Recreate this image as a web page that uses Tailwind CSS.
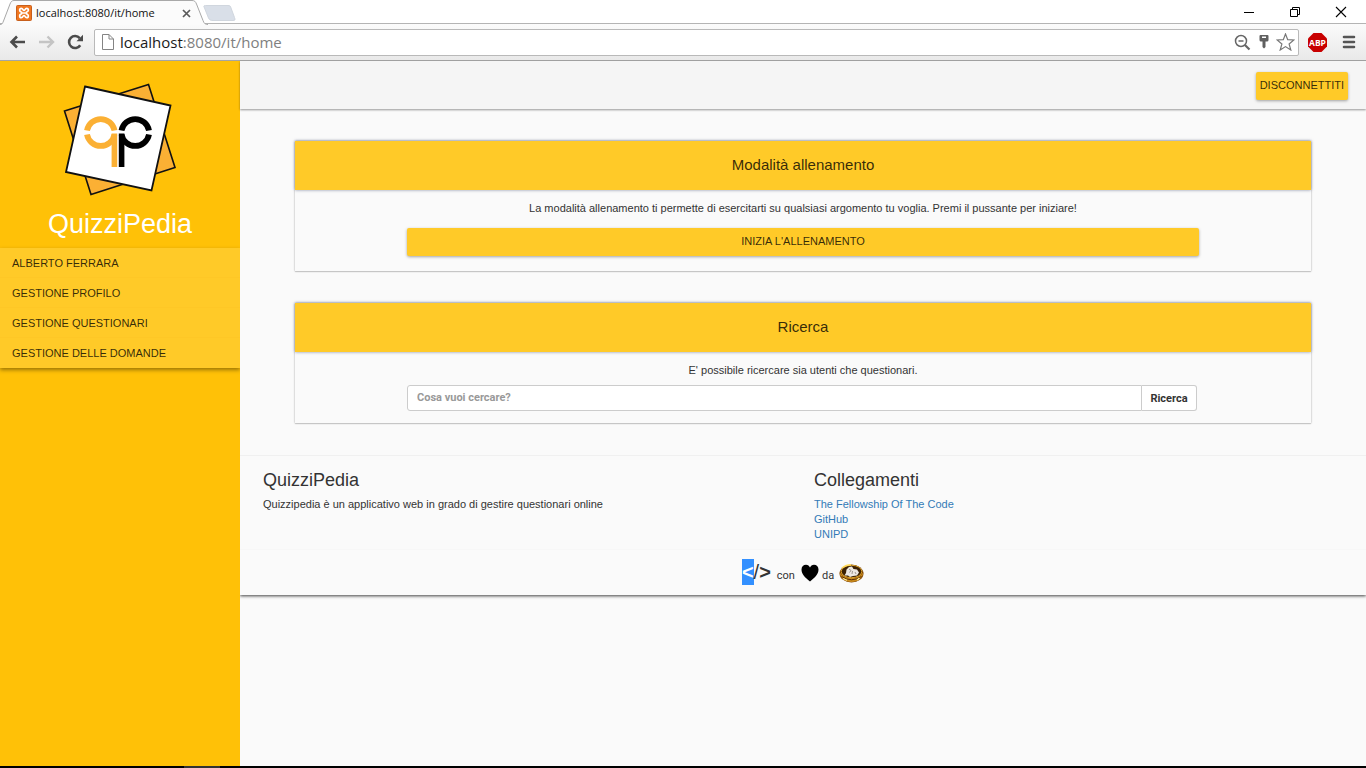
<!DOCTYPE html>
<html lang="it">
<head>
<meta charset="utf-8">
<title>QuizziPedia</title>
<script src="https://cdn.jsdelivr.net/npm/@tailwindcss/browser@4"></script>
</head>
<body class="flex min-h-screen flex-col bg-[#fafafa] font-['Liberation_Sans',Arial,sans-serif] text-[11px] leading-[15px] text-[#333]">

<!-- Browser window -->
<div class="border-b border-[#a5a5a5] bg-white font-['Open_Sans',sans-serif]">
  <div class="flex h-6 items-start justify-between border-b border-[#b4b4b4]">
    <div class="relative flex h-6 w-[240px] items-center">
      <svg class="absolute left-0 top-0" width="240" height="25" viewBox="0 0 240 25" fill="none">
        <path d="M0 24.5C2 24.5 2.500 23.500 3.500 21L10 4C11 1.500 12 .5 14 .5H192C194.500 .5 195.500 1.500 196.500 4L203 20.500C204 23.500 205.500 24.500 208 24.500V25H0Z" fill="#fbfbfb"/>
        <path d="M0 24.500C2 24.500 2.500 23.500 3.500 21L10 4C11 1.500 12 .5 14 .5H192C194.500 .5 195.500 1.500 196.500 4L203 20.500C204 23.500 205.500 24.500 208 24.500" stroke="#a8a8a8"/>
        <path d="M205.500 5.500H228C230 5.500 230.500 6 231 8L234.500 17.500C235.500 20 235 20.500 233 20.500H213C210.500 20.500 209.500 20 208.500 18L204.500 8C203.500 6 203.500 5.500 205.500 5.500Z" fill="#d9dfe8" stroke="#d0d6de"/>
      </svg>
      <svg class="relative ml-4 mt-[2px]" width="16" height="16" viewBox="0 0 16 16">
        <rect x=".5" y=".5" width="15" height="15" rx="1" fill="#f0761f" stroke="#c75f1c"/>
        <path d="M5.500 6.800C3 6.800 3.200 3.400 5.300 3.400C7.200 3.400 6.800 5.500 8 5.500S8.800 3.400 10.700 3.400C12.800 3.400 13 6.800 10.500 6.800M5.500 9.200C3 9.200 3.200 12.600 5.300 12.600C7.200 12.600 6.800 10.500 8 10.500S8.800 12.600 10.700 12.600C12.800 12.600 13 9.200 10.500 9.200M5.500 6.500V9.500M10.500 6.500V9.500M6 8H10" fill="none" stroke="#fff" stroke-width="1.700"/>
      </svg>
      <span class="relative ml-1 mt-[2px] w-[142px] text-[11px] leading-4 text-[#111]">localhost:8080/it/home</span>
      <button class="relative ml-1 mt-[2px]" aria-label="Chiudi scheda"><svg width="9" height="9" viewBox="0 0 9 9" stroke="#5a5a5a" stroke-width="1.700"><path d="M1 1L8 8M8 1L1 8"/></svg></button>
    </div>
    <div class="flex items-center gap-[34px] pr-[19px] pt-[6px]">
      <button aria-label="Riduci"><svg width="12" height="12" viewBox="0 0 12 12"><path d="M1 6.500H11" stroke="#000"/></svg></button>
      <button aria-label="Ripristina"><svg width="12" height="12" viewBox="0 0 12 12" fill="none" stroke="#000"><path d="M1.500 3.500H8.500V10.500H1.500ZM3.500 3.500V1.500H10.500V8.500H8.500"/></svg></button>
      <button aria-label="Chiudi"><svg width="12" height="12" viewBox="0 0 12 12" stroke="#000" stroke-width="1.100"><path d="M1 1L11 11M11 1L1 11"/></svg></button>
    </div>
  </div>
  <div class="flex h-9 items-center bg-linear-to-b from-[#fbfbfb] to-[#e9e9e9] pl-[9px] pr-2">
    <button aria-label="Indietro"><svg width="18" height="16" viewBox="0 0 18 16" fill="none" stroke="#4b4b4b" stroke-width="2.600"><path d="M16 8H3M8 2.500L2.500 8L8 13.500"/></svg></button>
    <button class="ml-3" aria-label="Avanti"><svg width="16" height="16" viewBox="0 0 16 16" fill="none" stroke="#c4c4c4" stroke-width="2.400"><path d="M0 8H13M8.500 2.500L14 8L8.500 13.500"/></svg></button>
    <button class="ml-3" aria-label="Ricarica"><svg width="17" height="16" viewBox="0 0 17 16"><path d="M13.200 11.200A6 6 0 1 1 12.700 4.200" fill="none" stroke="#4b4b4b" stroke-width="2.600"/><path d="M16 .8V7.300H9.500Z" fill="#4b4b4b"/></svg></button>
    <div class="ml-[10px] flex h-[27px] flex-1 items-center rounded-xs border border-[#b9b9b9] bg-white pl-[7px] pr-[3px]">
      <svg width="12" height="16" viewBox="0 0 12 16" fill="#fff" stroke="#848484"><path d="M.5 .5H7L11.500 5V15.500H.5Z"/><path d="M7 .5V5H11.500" fill="none"/></svg>
      <div class="ml-[6px] flex-1 text-[15px] leading-5 text-[#808080]"><span class="text-[#1a1a1a]">localhost</span>:8080/it/home</div>
      <button aria-label="Zoom"><svg width="17" height="17" viewBox="0 0 17 17" fill="none" stroke="#666"><circle cx="7" cy="7" r="5.500" stroke-width="1.500"/><path d="M4.500 7H9.500" stroke-width="1.500"/><path d="M11 11L15.500 15.500" stroke-width="2.200"/></svg></button>
      <button class="ml-2" aria-label="Password"><svg width="10" height="16" viewBox="0 0 10 16" fill="#606060"><path fill-rule="evenodd" d="M1.500 1H8.500Q9.500 1 9.500 2V6Q9.500 7.500 8 7.500H6.500V13L5 14.500L3.500 13V7.500H2Q.5 7.500 .5 6V2Q.5 1 1.500 1ZM3 2.500V4H7V2.500Z"/></svg></button>
      <button class="ml-[7px]" aria-label="Preferiti"><svg width="19" height="18" viewBox="0 0 19 18" fill="#fff" stroke="#777" stroke-width="1.200"><path d="M9.500 1L11.700 6.600L17.900 7L13.100 11L14.800 17L9.500 13.600L4.200 17L5.900 11L1.100 7L7.300 6.600Z"/></svg></button>
    </div>
    <button class="ml-2" aria-label="Adblock Plus"><svg width="21" height="21" viewBox="0 0 21 21"><path d="M6.500 1H14.500L20 6.500V14.500L14.500 20H6.500L1 14.500V6.500Z" fill="#c80000"/><text x="10.500" y="13.800" text-anchor="middle" font-family="Open Sans, sans-serif" font-weight="700" font-size="8.500" fill="#fff">ABP</text></svg></button>
    <button class="ml-[14px] mr-[2px]" aria-label="Menu"><svg width="14" height="14" viewBox="0 0 14 14" stroke="#555" stroke-width="2.600" stroke-linecap="round"><path d="M2 2H12M2 7H12M2 12H12"/></svg></button>
  </div>
</div>

<!-- Page -->
<div class="flex flex-1">
  <aside class="w-60 shrink-0 overflow-x-clip bg-[#ffc107]">
    <div class="flex flex-col items-center pt-[22px]">
      <svg width="114" height="114" viewBox="0 0 114 114">
        <path d="M1.500 28L85.500 1.500L112 84.500L28 111.500Z" fill="#fbb034" stroke="#111" stroke-width="1.600"/>
        <path d="M22 3.500L107.500 22.500L88.500 107.500L3 89Z" fill="#fff" stroke="#111" stroke-width="1.800"/>
        <g fill="none" stroke-width="5.800">
          <path d="M24 47.500A14 14 0 0 1 51.500 47.500M24 51.500A14 14 0 0 0 51.500 51.500" stroke="#fbb034"/>
          <path d="M51.500 50V84" stroke="#fbb034"/>
          <path d="M58.500 47.500A14 14 0 0 1 86 47.500M58.500 51.500A14 14 0 0 0 86 51.500" stroke="#000"/>
          <path d="M58.500 50V84" stroke="#000"/>
        </g>
        <path d="M20 49.500H90" stroke="#fff" stroke-width="2.200"/>
        <path d="M55 50V84" stroke="#fff"/>
      </svg>
      <div class="mt-3 pb-2 text-[27px] leading-[31px] text-white">QuizziPedia</div>
    </div>
    <nav class="bg-[#ffca28] uppercase text-black/80 shadow-[0_2px_4px_rgba(0,0,0,0.4)]">
      <a href="#" class="flex h-[30px] items-center border-y border-t-transparent border-b-[#fec726] px-3">Alberto Ferrara</a>
      <a href="#" class="flex h-[30px] items-center border-y border-t-transparent border-b-[#fec726] px-3">Gestione profilo</a>
      <a href="#" class="flex h-[30px] items-center border-y border-t-transparent border-b-[#fec726] px-3">Gestione questionari</a>
      <a href="#" class="flex h-[30px] items-center px-3">Gestione delle domande</a>
    </nav>
  </aside>

  <div class="min-w-0 flex-1">
    <header class="flex h-12 items-center justify-end bg-[#f5f5f5] pr-[18px] pt-px shadow-[0_1px_2px_rgba(0,0,0,0.4)]">
      <button class="h-7 rounded-xs bg-[#ffca28] px-1 uppercase text-black/80 shadow-[0_1px_3px_rgba(0,0,0,0.35)]">Disconnettiti</button>
    </header>

    <main class="flex flex-col gap-8 px-[55px] pb-8 pt-8">
      <section class="pb-[15px] text-center shadow-[0_0_2px_rgba(0,0,0,0.3),0_1px_1px_rgba(0,0,0,0.12)]">
        <h2 class="flex h-[49px] items-center justify-center bg-[#ffca28] pb-[2px] text-[15px] text-black/80 shadow-[0_0_3px_rgba(60,70,110,0.6)]">Modalità allenamento</h2>
        <p class="pt-[11px]">La modalità allenamento ti permette di esercitarti su qualsiasi argomento tu voglia. Premi il pussante per iniziare!</p>
        <div class="px-28 pt-3">
          <button class="h-7 w-full rounded-xs bg-[#ffca28] pb-[2px] uppercase text-black/80 shadow-[0_1px_3px_rgba(0,0,0,0.35)]">Inizia l'allenamento</button>
        </div>
      </section>

      <section class="pb-3 text-center shadow-[0_0_2px_rgba(0,0,0,0.3),0_1px_1px_rgba(0,0,0,0.12)]">
        <h2 class="flex h-[49px] items-center justify-center bg-[#ffca28] pb-[2px] text-[15px] text-black/80 shadow-[0_0_3px_rgba(60,70,110,0.6)]">Ricerca</h2>
        <p class="pt-[11px]">E' possibile ricercare sia utenti che questionari.</p>
        <form class="flex pl-28 pr-[114px] pt-[7px] font-['Roboto',sans-serif] font-bold">
          <input type="text" aria-label="Cosa vuoi cercare?" placeholder="Cosa vuoi cercare?" class="h-[26px] min-w-0 flex-1 rounded-l-[3px] border border-[#ccc] bg-white px-[9px] pb-[2px] placeholder:text-[#999]">
          <button type="button" class="h-[26px] w-[55px] rounded-r-[3px] border border-l-0 border-[#ccc] bg-white">Ricerca</button>
        </form>
      </section>
    </main>

    <footer class="pb-[10px] pt-[14px] shadow-[0_1px_3px_rgba(0,0,0,0.75)] [clip-path:inset(0_0_-6px_0)] border-t border-[#f0f0f0]">
      <div class="grid grid-cols-2 px-3 pb-[7px]">
        <div class="px-[11px]">
          <h3 class="text-[18px] leading-5">QuizziPedia</h3>
          <p class="pt-[7px]">Quizzipedia è un applicativo web in grado di gestire questionari online</p>
        </div>
        <div class="px-[11px]">
          <h3 class="text-[18px] leading-5">Collegamenti</h3>
          <ul class="pt-[7px] text-[#337ab7]">
            <li><a href="#">The Fellowship Of The Code</a></li>
            <li><a href="#">GitHub</a></li>
            <li><a href="#">UNIPD</a></li>
          </ul>
        </div>
      </div>
      <div class="flex items-center justify-center border-t border-[#f7f7f7] pt-[9px] font-['Roboto',sans-serif]">
        <span class="flex h-[26px] items-center font-['Liberation_Sans',Arial,sans-serif] text-[20px] font-bold leading-[26px]"><span class="bg-[#3390ff] text-white">&lt;</span><span class="font-normal">/</span><span>&gt;</span></span>
        <span class="ml-[6px] mt-[6px]">con</span>
        <svg class="ml-[6px] mt-[2px]" width="18" height="18" viewBox="0 0 18 18"><path d="M9 17.500C4 13.500 .5 10 .5 5.500C.5 2.500 2.500 .7 5 .7C7 .7 8.300 1.800 9 3.500C9.700 1.800 11 .7 13 .7C15.500 .7 17.500 2.500 17.500 5.500C17.500 10 14 13.500 9 17.500Z"/></svg>
        <span class="ml-[3px] mt-[6px]">da</span>
        <svg class="ml-[5px] mt-[2px]" width="25" height="19" viewBox="0 0 25 19">
          <ellipse cx="12.500" cy="9.500" rx="12" ry="9" fill="#7a4205"/>
          <path d="M.7 8C1 14 6 18 12.500 18S24 14 24.300 8C22 12 18 14 12.500 14S3 12 .7 8Z" fill="#c98a1c"/>
          <path d="M2.500 12.500Q12.500 19 22.500 12.500" fill="none" stroke="#5a2d02"/>
          <path d="M4 14.500L8 16.300M18 16L20.500 14" stroke="#fff0a0" stroke-width="1.200"/>
          <ellipse cx="12.500" cy="7.500" rx="10.300" ry="6.200" fill="#3c2103" stroke="#d9a12c"/>
          <path d="M7 9L7.500 5.500L10 3L13 2.500L14.500 5L18 5.500L20 8.500L18 11.500L14 12L11 13L9 11.500L5.500 11.500Z" fill="#ece8e2"/>
          <path d="M10 5L12 6.500L10.500 8.500M13.500 7L13 10M16 8L17 10" stroke="#8b8078" stroke-width=".8" fill="none"/>
          <path d="M3 4Q7 .8 12 .8" stroke="#ffda5a" stroke-width="1.400" fill="none"/>
        </svg>
      </div>
    </footer>
  </div>
</div>

<div class="h-[2px] bg-black pl-[184px]"><div class="h-[2px] w-9 bg-[#333]"></div></div>
</body>
</html>
